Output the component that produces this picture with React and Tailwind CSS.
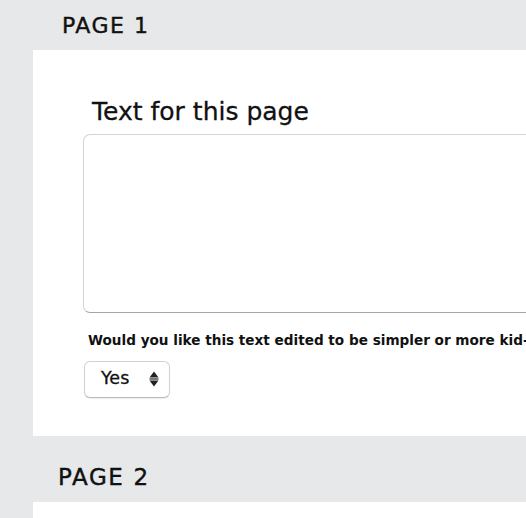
export default function App() {
  return (
    <div
      className="w-[526px] h-[518px] overflow-hidden bg-[#e6e8ea] pl-[33px]"
      style={{ fontFamily: '"DejaVu Sans", Verdana, sans-serif' }}
    >
      <div className="w-[640px]">
        {/* page 1 */}
        <div className="pt-[15px] pb-[13px] pl-[29px]">
          <h2 className="text-[22px] leading-[22px] font-normal tracking-[1.5px] text-[#111] [-webkit-text-stroke:0.4px_#111]">PAGE 1</h2>
        </div>
        <div className="bg-white pt-[49px] pb-[38px] pl-[50px]">
          <label className="block pl-[9px] text-[25px] leading-[25px] text-[#111] [-webkit-text-stroke:0.3px_#111]">
            Text for this page
          </label>
          <textarea
            className="block mt-[10px] w-[560px] h-[179px] resize-none rounded-[7px] border border-[#d4d4d4] border-b-[#a6a6a6] bg-white"
          />
          <p className="mt-[21px] ml-[5px] text-[13.6px] leading-[13.6px] font-bold text-[#111] whitespace-nowrap">
            Would you like this text edited to be simpler or more kid-friendly?
          </p>
          <div className="mt-[13px] ml-[1px] w-[86px] h-[37px] flex items-center justify-between pl-[16px] pr-[10px] rounded-[6px] border border-[#d2d2d2] border-b-[#bdbdbd] bg-white shadow-[0_1px_1px_rgba(0,0,0,0.08)]">
            <span className="text-[17.5px] leading-none text-[#111] [-webkit-text-stroke:0.3px_#111]">Yes</span>
            <svg width="10" height="16" viewBox="0 0 10 16" className="text-[#222]">
              <path d="M0.5 6.5 L5 0.5 L9.5 6.5 Z" fill="currentColor" />
              <rect x="0.5" y="7.4" width="9" height="1.2" fill="currentColor" />
              <path d="M0.5 9.5 L9.5 9.5 L5 15.5 Z" fill="currentColor" />
            </svg>
          </div>
        </div>

        {/* page 2 */}
        <div className="pt-[30px] pb-[13px] pl-[25px]">
          <h2 className="text-[23px] leading-[23px] font-normal tracking-[1.6px] text-[#111] [-webkit-text-stroke:0.4px_#111]">PAGE 2</h2>
        </div>
        <div className="bg-white h-[120px]" />
      </div>
    </div>
  )
}
